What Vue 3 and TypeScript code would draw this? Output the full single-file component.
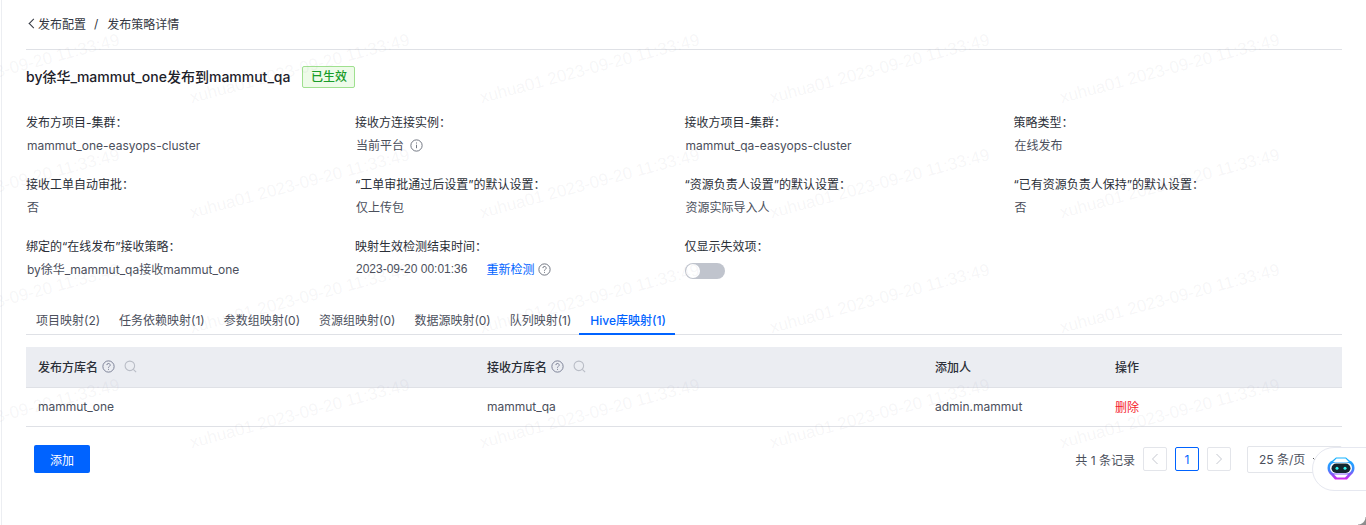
<script setup lang="ts">
interface Field {
  label: string
  value: string
  hint?: boolean
}

const fields: Field[] = [
  { label: '发布方项目-集群：', value: 'mammut_one-easyops-cluster' },
  { label: '接收方连接实例：', value: '当前平台', hint: true },
  { label: '接收方项目-集群：', value: 'mammut_qa-easyops-cluster' },
  { label: '策略类型：', value: '在线发布' },
  { label: '接收工单自动审批：', value: '否' },
  { label: '“工单审批通过后设置”的默认设置：', value: '仅上传包' },
  { label: '“资源负责人设置”的默认设置：', value: '资源实际导入人' },
  { label: '“已有资源负责人保持”的默认设置：', value: '否' },
  { label: '绑定的“在线发布”接收策略：', value: 'by徐华_mammut_qa接收mammut_one' }
]

const tabs = ['项目映射(2)', '任务依赖映射(1)', '参数组映射(0)', '资源组映射(0)', '数据源映射(0)', '队列映射(1)', 'Hive库映射(1)']

const marks: { left: string; top: string }[] = []
for (let r = 0; r < 4; r++) {
  for (let c = 0; c < 5; c++) {
    marks.push({ left: `${-97 + c * 290}px`, top: `${88 + r * 115}px` })
  }
}
</script>

<template>
  <div class="page">
    <div class="crumbs">
      <span class="back"></span>
      <span>发布配置</span>
      <span class="sep">/</span>
      <span>发布策略详情</span>
    </div>
    <div class="head">
      <h1>by徐华_mammut_one发布到mammut_qa</h1>
      <span class="tag">已生效</span>
    </div>

    <div class="fields">
      <div v-for="f in fields" :key="f.label" class="field">
        <div class="label">{{ f.label }}</div>
        <div class="value">
          {{ f.value }}
          <svg v-if="f.hint" class="ico" viewBox="0 0 12 12"><circle cx="6" cy="6" r="5.2" /><path d="M6 5.300v3.200M6 3.200v1" /></svg>
        </div>
      </div>
      <div class="field">
        <div class="label">映射生效检测结束时间：</div>
        <div class="value">
          <span class="date">2023-09-20 00:01:36</span>
          <a class="link">重新检测</a>
          <svg class="ico" viewBox="0 0 12 12"><circle cx="6" cy="6" r="5.2" /><path d="M4.500 4.700a1.500 1.500 0 1 1 2.200 1.300c-.5.300-.7.600-.7 1.100M6 8.200v.9" /></svg>
        </div>
      </div>
      <div class="field">
        <div class="label">仅显示失效项：</div>
        <div class="switch"><i></i></div>
      </div>
    </div>

    <div class="tabs">
      <span v-for="(t, i) in tabs" :key="t" class="tab" :class="{ on: i === 6 }">{{ t }}</span>
    </div>

    <div class="table">
      <div class="row th">
        <div>发布方库名
          <svg class="ico dark" viewBox="0 0 12 12"><circle cx="6" cy="6" r="5.2" /><path d="M4.500 4.700a1.500 1.500 0 1 1 2.200 1.300c-.5.300-.7.600-.7 1.100M6 8.200v.9" /></svg>
          <svg class="search" viewBox="0 0 12 12"><circle cx="5.400" cy="5.400" r="4.400" /><path d="M8.600 8.600l2.600 2.600" /></svg>
        </div>
        <div>接收方库名
          <svg class="ico dark" viewBox="0 0 12 12"><circle cx="6" cy="6" r="5.2" /><path d="M4.500 4.700a1.500 1.500 0 1 1 2.200 1.300c-.5.300-.7.600-.7 1.100M6 8.200v.9" /></svg>
          <svg class="search" viewBox="0 0 12 12"><circle cx="5.400" cy="5.400" r="4.400" /><path d="M8.600 8.600l2.600 2.600" /></svg>
        </div>
        <div>添加人</div>
        <div>操作</div>
      </div>
      <div class="row td">
        <div>mammut_one</div>
        <div>mammut_qa</div>
        <div>admin.mammut</div>
        <div class="del">删除</div>
      </div>
    </div>

    <div class="foot">
      <button class="add">添加</button>
      <div class="pager">
        <span class="total">共 1 条记录</span>
        <span class="pg"><svg viewBox="0 0 10 14"><path d="M7.500 2L2.500 7l5 5" /></svg></span>
        <span class="pg cur">1</span>
        <span class="pg"><svg viewBox="0 0 10 14"><path d="M2.500 2l5 5-5 5" /></svg></span>
        <span class="size">25 条/页<svg class="caret" viewBox="0 0 8 5"><path d="M1 1l3 3 3-3" /></svg></span>
      </div>
    </div>

    <div class="marks">
      <span v-for="(m, i) in marks" :key="i" class="mark" :style="m">xuhua01 2023-09-20 11:33:49</span>
    </div>

    <div class="bot">
      <svg viewBox="0 0 28 23" width="28" height="23">
        <defs>
          <linearGradient id="bg" x1="0" y1="0" x2="0" y2="1">
            <stop offset="0" stop-color="#12b4ff" />
            <stop offset="0.55" stop-color="#3a8cff" />
            <stop offset="1" stop-color="#d81ff0" />
          </linearGradient>
        </defs>
        <path d="M9 .5h10l3.500 3c3 1 5 3.500 5 7.500 0 3-1.500 5.500-3.500 7l-4 4.500H8l-4-4.500C2 16.500.5 14 .5 11c0-4 2-6.500 5-7.500z" fill="url(#bg)" />
        <path d="M9.500 1.500h9l3.500 3.500H6z" fill="#fff" />
        <rect x="3" y="5.500" width="22" height="11" rx="5.500" fill="#fff" />
        <path d="M7 17.500h14l-3 3H10z" fill="#fff" />
        <rect x="4.500" y="6.500" width="19" height="9.500" rx="4.700" fill="#14262f" />
        <circle cx="10" cy="11.200" r="1.500" fill="#2ff5ee" />
        <circle cx="18" cy="11.200" r="1.500" fill="#2ff5ee" />
      </svg>
    </div>
    <span class="corner"></span>
  </div>
</template>

<style>
html, body { margin: 0; background: #fff; }
</style>

<style scoped>
.page {
  position: relative;
  width: 1366px;
  height: 525px;
  box-sizing: border-box;
  padding: 0 24px 0 26px;
  overflow: hidden;
  background: linear-gradient(90deg, #fff 1px, #eceef2 1px, #eceef2 2px, #fff 2px);
  font-family: Inter, "Noto Sans CJK SC", sans-serif;
  font-size: 12px;
  color: #4b4f5c;
}
.crumbs {
  display: flex;
  align-items: center;
  height: 50px;
  box-sizing: border-box;
  padding-bottom: 3px;
  border-bottom: 1px solid #dfe1e6;
  color: #333741;
}
.back {
  width: 6px;
  height: 6px;
  margin: 0 1px 0 4px;
  border-left: 1px solid #333741;
  border-bottom: 1px solid #333741;
  transform: rotate(45deg);
}
.sep { margin: 0 9px 0 8px; }
.head {
  display: flex;
  align-items: center;
  gap: 12px;
  height: 53px;
}
h1 {
  margin: -2px 0 0;
  font-size: 14px;
  font-weight: 500;
  color: #1d2129;
}
.tag {
  padding: 0 7.500px;
  height: 20px;
  line-height: 20px;
  font-size: 12px;
  font-weight: 500;
  color: #1a9c2a;
  background: #eefbe9;
  border: 1px solid #9fe08f;
  border-radius: 2px;
}
.fields {
  display: grid;
  grid-template-columns: 329px 329.500px 329px 1fr;
  grid-auto-rows: 62px;
  margin-top: 9px;
  margin-bottom: 1px;
}
.label { color: #2b2f38; line-height: 17px; padding-top: 2px; }
.value { margin-top: 6px; line-height: 17px; display: flex; align-items: center; gap: 6px; padding-left: 1px; }
.date { font-family: "Liberation Sans", sans-serif; margin-right: 13px; }
.link { color: #0063ff; margin-right: -2px; }
.ico { width: 13px; height: 13px; fill: none; stroke: #6f7480; stroke-width: 0.9; }
.ico.dark { stroke: #7b8196; vertical-align: -2px; margin-left: 1px; }
.search { width: 13px; height: 13px; fill: none; stroke: #b9bdc6; stroke-width: 1; vertical-align: -2px; margin-left: 6px; }
.switch {
  position: relative;
  width: 40px;
  height: 16px;
  margin-top: 8px;
  border-radius: 8px;
  background: #c0c4cd;
}
.switch i {
  position: absolute;
  left: 1px;
  top: 1px;
  width: 14px;
  height: 14px;
  border-radius: 50%;
  background: #fff;
}
.tabs {
  display: flex;
  align-items: flex-start;
  height: 36px;
  box-sizing: border-box;
  border-bottom: 1px solid #dfe1e6;
}
.tab { padding: 0 9.500px; line-height: 44px; height: 35px; color: #4b4f5c; }
.tab:first-child { padding-left: 10px; }
.tab.on {
  color: #0063ff;
  font-weight: 500;
  height: 36px;
  box-sizing: border-box;
  margin-left: -2px;
  padding: 0 9px 0 11.500px;
  border-bottom: 2px solid #0063ff;
}
.table { margin-top: 12px; }
.row {
  display: grid;
  grid-template-columns: 449px 448px 180px 1fr;
}
.row > div { padding: 0 0 2px 12px; display: flex; align-items: center; gap: 3px; }
.th {
  height: 41px;
  box-sizing: border-box;
  background: #ebedf2;
  border-bottom: 1px solid #dfe1e6;
  color: #2b2f38;
  font-weight: 500;
}
.td { height: 39px; box-sizing: border-box; border-bottom: 1px solid #dfe1e6; }
.del { color: #f5222d; }
.foot {
  display: flex;
  align-items: center;
  justify-content: space-between;
  margin-top: 18px;
  padding-left: 8px;
}
.add {
  width: 56px;
  height: 28px;
  border: 0;
  border-radius: 2px;
  background: #0063ff;
  color: #fff;
  font: inherit;
}
.pager { display: flex; align-items: center; gap: 8px; }
.pg {
  width: 24px;
  height: 24px;
  box-sizing: border-box;
  display: flex;
  align-items: center;
  justify-content: center;
  border: 1px solid #e3e5ea;
  border-radius: 2px;
  color: #0063ff;
}
.pg svg { width: 10px; height: 14px; fill: none; stroke: #c5c8d0; stroke-width: 1; }
.pg.cur { border-color: #0063ff; }
.size {
  position: relative;
  width: 95px;
  height: 27px;
  box-sizing: border-box;
  margin-left: 8px;
  padding-left: 11px;
  line-height: 25px;
  border: 1px solid #e3e5ea;
  border-radius: 2px;
}
.caret { position: absolute; left: 64px; top: 10px; width: 8px; height: 5px; fill: none; stroke: #555; stroke-width: 1; }
.bot {
  position: absolute;
  left: 1312px;
  top: 447px;
  width: 80px;
  height: 44px;
  box-sizing: border-box;
  display: flex;
  align-items: center;
  padding: 0 0 2px 14px;
  background: #fff;
  border: 1px solid #e6e8f0;
  border-radius: 22px;
}
.marks { position: absolute; inset: 0; pointer-events: none; }
.mark {
  position: absolute;
  white-space: nowrap;
  font-family: "Liberation Sans", sans-serif;
  font-size: 17px;
  color: rgba(130, 135, 150, 0.08);
  transform: rotate(-15deg);
  transform-origin: 0 100%;
}
.corner {
  position: absolute;
  right: 0;
  bottom: 0;
  width: 8px;
  height: 8px;
  background: radial-gradient(circle at 0 0, transparent 7px, #8d8d8d 8px);
}
</style>
